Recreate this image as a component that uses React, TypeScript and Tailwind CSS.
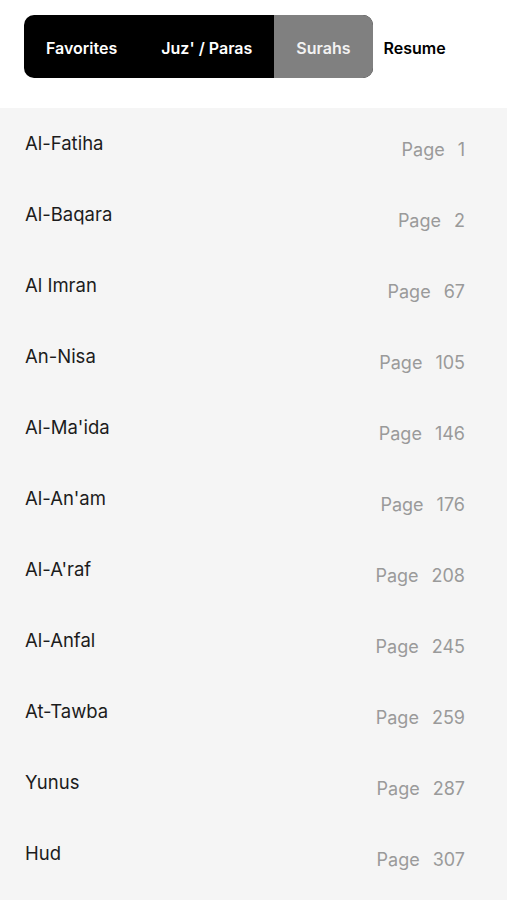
const SURAHS = [
  { name: "Al-Fatiha", page: 1 },
  { name: "Al-Baqara", page: 2 },
  { name: "Al Imran", page: 67 },
  { name: "An-Nisa", page: 105 },
  { name: "Al-Ma'ida", page: 146 },
  { name: "Al-An'am", page: 176 },
  { name: "Al-A'raf", page: 208 },
  { name: "Al-Anfal", page: 245 },
  { name: "At-Tawba", page: 259 },
  { name: "Yunus", page: 287 },
  { name: "Hud", page: 307 },
];

const TABS = ["Favorites", "Juz' / Paras", "Surahs"];

export default function App() {
  const active = "Surahs";
  return (
    <div className="min-h-[900px] bg-[#f5f5f5] font-['Inter','Liberation_Sans',sans-serif]">
      {/* top tabs */}
      <div className="flex h-[108px] items-start bg-white pl-6 pt-[15px]">
        <div className="flex h-[63px] overflow-hidden rounded-[10px] bg-black">
          {TABS.map(t => (
            <div
              key={t}
              className={`flex items-center px-[22px] pt-[2px] text-[16px] font-semibold ${t === active ? "bg-[#808080] text-[#f2f2f2]" : "text-white"}`}
            >
              {t}
            </div>
          ))}
        </div>
        <div className="flex h-[63px] items-center pl-[11px] pt-[2px] text-[16px] font-semibold text-black">Resume</div>
      </div>

      {/* surah list */}
      <div className="flex flex-col">
        {SURAHS.map(s => (
          <div key={s.name} className="flex h-[71px] items-center justify-between pl-[25px] pr-[42px]">
            <span className="text-[18.5px] text-[#1c1c1c]">{s.name}</span>
            <span className="mt-3 flex gap-[13px] text-[18px] text-[#9a9a9a]">
              <span>Page</span>
              <span>{s.page}</span>
            </span>
          </div>
        ))}
      </div>
    </div>
  );
}
